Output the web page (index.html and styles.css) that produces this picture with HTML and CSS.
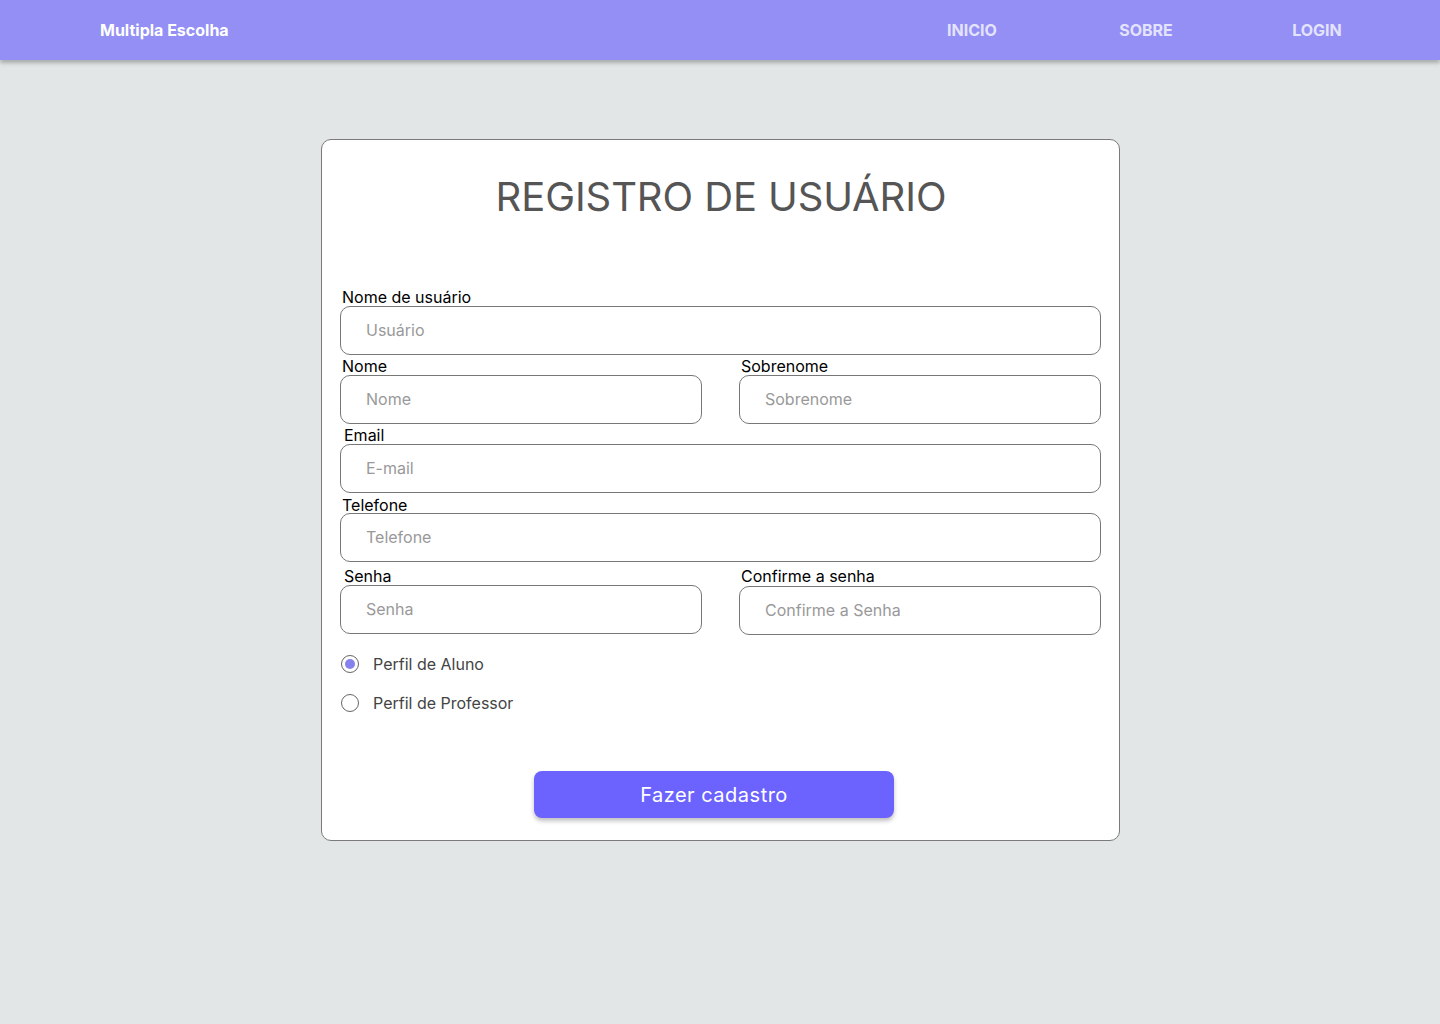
FILE: index.html
```html
<!DOCTYPE html>
<html lang="pt-BR">
<head>
<meta charset="utf-8">
<title>Registro de Usuário</title>
<link rel="stylesheet" href="styles.css">
</head>
<body>
<header class="topbar">
  <div class="brand">Multipla Escolha</div>
  <nav class="nav">
    <a class="nav-item nav-inicio" href="#">INICIO</a>
    <a class="nav-item nav-sobre" href="#">SOBRE</a>
    <a class="nav-item nav-login" href="#">LOGIN</a>
  </nav>
</header>
<main class="main">
  <form class="card">
    <h1 class="title">REGISTRO DE USUÁRIO</h1>
    <div class="fields">
      <div class="field">
        <label class="label">Nome de usuário</label>
        <input class="input" placeholder="Usuário">
      </div>
      <div class="row">
        <div class="field">
          <label class="label">Nome</label>
          <input class="input" placeholder="Nome">
        </div>
        <div class="field">
          <label class="label">Sobrenome</label>
          <input class="input" placeholder="Sobrenome">
        </div>
      </div>
      <div class="field">
        <label class="label label-indent">Email</label>
        <input class="input" placeholder="E-mail">
      </div>
      <div class="field">
        <label class="label label-low">Telefone</label>
        <input class="input" placeholder="Telefone">
      </div>
      <div class="row row-senha">
        <div class="field">
          <label class="label label-indent">Senha</label>
          <input class="input" placeholder="Senha">
        </div>
        <div class="field field-confirm">
          <label class="label">Confirme a senha</label>
          <input class="input" placeholder="Confirme a Senha">
        </div>
      </div>
    </div>
    <div class="radios">
      <label class="radio"><input type="radio" name="perfil" checked><span>Perfil de Aluno</span></label>
      <label class="radio"><input type="radio" name="perfil"><span>Perfil de Professor</span></label>
    </div>
    <div class="actions">
      <button type="button" class="btn">Fazer cadastro</button>
    </div>
  </form>
</main>
</body>
</html>
```
FILE: styles.css
```css
* { box-sizing: border-box; }
html, body { margin: 0; padding: 0; }
body {
  background: #e2e6e7;
  font-family: Inter, "Noto Sans", sans-serif;
  min-height: 1024px;
}
.topbar {
  height: 60px;
  background: #938ff5;
  display: flex;
  align-items: center;
  padding-left: 100px;
  box-shadow: 0 3px 4px rgba(0,0,0,0.25);
  position: relative;
}
.brand {
  color: #ffffff;
  font-weight: 700;
  font-size: 16px;
  flex: 1;
}
.nav { display: flex; align-items: center; height: 100%; }
.nav-item {
  color: #e4e3fc;
  font-weight: 700;
  font-size: 16px;
  text-decoration: none;
  text-align: center;
}
.nav-inicio { width: 100px; margin-right: 74px; }
.nav-sobre { width: 100px; margin-right: 71px; }
.nav-login { width: 100px; margin-right: 73px; }
.main {
  display: flex;
  justify-content: center;
  padding-top: 79px;
  padding-left: 1px;
}
.card {
  width: 799px;
  height: 702px;
  background: #ffffff;
  border: 1px solid #7a7a7a;
  border-radius: 10px;
  padding: 0 18px;
  display: flex;
  flex-direction: column;
}
.title {
  margin: 33px 0 0;
  text-align: center;
  font-weight: 400;
  font-size: 40px;
  line-height: 48px;
  color: #555555;
  letter-spacing: -0.1px;
  padding-left: 1px;
}
.fields {
  margin-top: 65px;
  display: flex;
  flex-direction: column;
}
.row {
  display: grid;
  grid-template-columns: 362px 362px;
  column-gap: 37px;
}
.row-senha { margin-top: 3px; }
.field { display: flex; flex-direction: column; }
.label {
  font-size: 16px;
  line-height: 20px;
  color: #000000;
  padding-left: 2px;
  padding-top: 1px;
  height: 20px;
  overflow: visible;
}
.label-indent { padding-left: 4px; }
.label-low { padding-top: 2px; }
.input {
  height: 49px;
  width: 100%;
  border: 1px solid #777777;
  border-radius: 10px;
  padding: 0 0 1px 25px;
  font-family: Inter, "Noto Sans", sans-serif;
  font-size: 16px;
  color: #333;
  background: #fff;
  outline: none;
}
.field-confirm .input { margin-top: 1px; }
.input::placeholder { color: #999999; }
.radios {
  margin-top: 19px;
  display: flex;
  flex-direction: column;
  gap: 19px;
}
.radio {
  display: flex;
  align-items: center;
  font-size: 16px;
  line-height: 20px;
  color: #444444;
}
.radio input {
  appearance: none;
  -webkit-appearance: none;
  width: 18px;
  height: 18px;
  margin: 0 14px 0 1px;
  border: 1px solid #666;
  border-radius: 50%;
  background: #fff;
  position: relative;
}
.radio input:checked::after {
  content: "";
  position: absolute;
  left: 3px; top: 3px;
  width: 10px; height: 10px;
  border-radius: 50%;
  background: #8582ee;
}
.actions {
  margin-top: 58px;
  display: flex;
  justify-content: center;
  padding-right: 13px;
}
.btn {
  width: 360px;
  height: 47px;
  border: none;
  border-radius: 8px;
  background: #6c63ff;
  color: #ffffff;
  font-family: Inter, "Noto Sans", sans-serif;
  font-size: 20px;
  letter-spacing: 0.5px;
  box-shadow: 0 3px 4px rgba(0,0,0,0.25);
  cursor: pointer;
}
```
